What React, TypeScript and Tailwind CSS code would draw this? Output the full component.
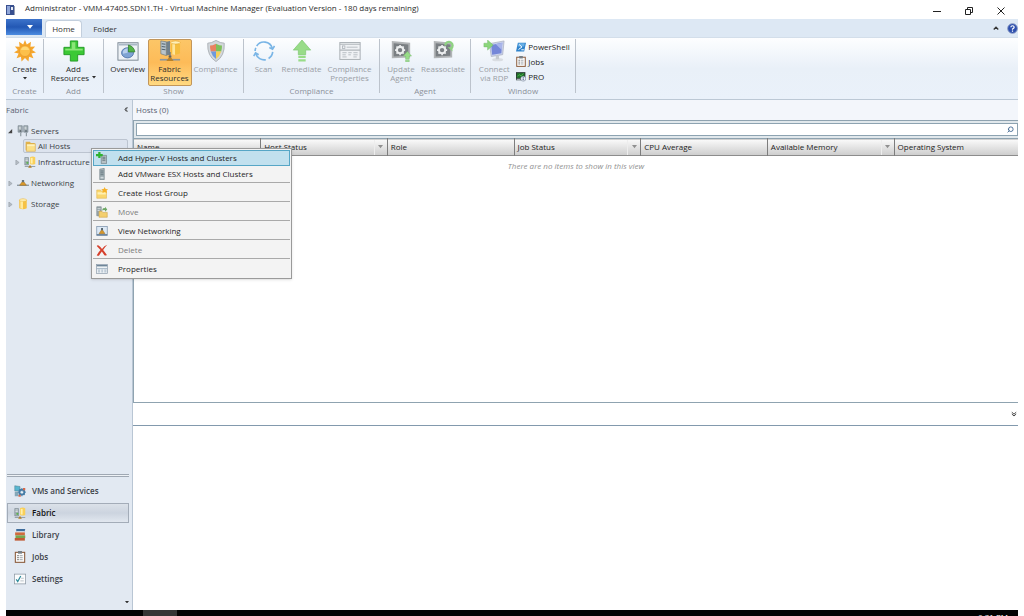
import React, { useState } from 'react';
import { Search } from 'lucide-react';

type IconProps = { className?: string };

const SunIcon = ({ className = '' }: IconProps) => (
  <svg viewBox="0 0 24 24" className={className}>
    <path
      d="M12 0l2 5 4.500-3-.6 5.300 5.100-.3-3.200 4 4.200 2.500-5 1.300 2.200 5-4.800-1.600-.6 5.300L12 19.500l-3.800 4-.6-5.300-4.800 1.600 2.200-5-5-1.300 4.200-2.500-3.200-4 5.100.3L5.500 2 10 5z"
      fill="#f5a62c"
    />
    <circle cx="12" cy="12" r="6" fill="#fdc04a" stroke="#e8982a" strokeWidth=".8" />
    <path d="M7.500 11a4.600 4.600 0 0 1 9 0z" fill="#ffd875" />
  </svg>
);

const PlusIcon = ({ className = '' }: IconProps) => (
  <svg viewBox="0 0 24 24" className={className}>
    <path d="M8 1h8v7h7v8h-7v7H8v-7H1V8h7z" fill="#3cc935" stroke="#229a25" strokeWidth="1" />
    <path d="M9.500 2.500h4v7h8v2h-19v-2h7z" fill="#8be578" />
  </svg>
);

const OverviewIcon = ({ className = '' }: IconProps) => (
  <svg viewBox="0 0 24 24" className={className}>
    <rect x="1" y="3" width="22" height="19" fill="#eef2f6" stroke="#76838f" />
    <rect x="2" y="4" width="20" height="2" fill="#a9b8c6" />
    <ellipse cx="11.500" cy="14" rx="6.500" ry="5.500" fill="#7fa3d3" stroke="#5276ab" />
    <path d="M6.500 12q2-3 5-3v5l-5 1z" fill="#b7cfec" />
    <path d="M12.500 13V5.500q6 1.500 7 7.500z" fill="#55b548" stroke="#2d7a2a" strokeWidth=".8" />
  </svg>
);

const FabricIcon = ({ className = '' }: IconProps) => (
  <svg viewBox="0 0 24 24" className={className}>
    <path d="M2 1l6 1v15l-6-2z" fill="#b9c5cc" stroke="#68767f" strokeWidth=".7" />
    <path d="M8 2l4-1v15l-4 1z" fill="#71818c" />
    <path d="M3 4l4 .6M3 7l4 .6M3 10l4 .6" stroke="#50626e" strokeWidth="1.100" />
    <path d="M13 2.500v12q4.500 3 10 0v-12z" fill="#f5bd3e" />
    <path d="M14.500 3v12.500l3 .8V4z" fill="#ffe59a" />
    <ellipse cx="18" cy="2.700" rx="5" ry="1.700" fill="#fff0b8" stroke="#e0a32b" strokeWidth=".6" />
    <path d="M1 21.500h22" stroke="#8b969e" strokeWidth="1.800" />
    <path d="M12 13v6" stroke="#6c7880" strokeWidth="1.500" />
    <path d="M8 23l4-5.500 4 5.500z" fill="#b9822a" />
    <rect x="10.500" y="17" width="3" height="2" fill="#5c6165" />
  </svg>
);

const ShieldIcon = ({ className = '' }: IconProps) => (
  <svg viewBox="0 0 24 24" className={className}>
    <path d="M12 .5q5 3 9 3 .8 14-9 20Q2.200 17.500 3 3.500q4 0 9-3z" fill="#d3d8dc" stroke="#a8aeb4" />
    <path d="M12 4Q8 6 5.500 6q-.2 3 .8 6.500H12z" fill="#ea8261" />
    <path d="M12 4q4 2 6.500 2 .2 3-.8 6.500H12z" fill="#7fc05c" />
    <path d="M6.300 12.500H12v8.200Q8 18 6.300 12.500z" fill="#6f99dc" />
    <path d="M17.700 12.500H12v8.200q4-2.700 5.700-8.200z" fill="#f5d05a" />
  </svg>
);

const ScanIcon = ({ className = '' }: IconProps) => (
  <svg viewBox="0 0 24 24" className={className} fill="none" stroke="#79b5e6" strokeWidth="1.800">
    <path d="M4 6.500A9.500 9.500 0 0 1 21 9M21.500 13a9.500 9.500 0 0 1-4.500 7.200M14 21.500A9.700 9.700 0 0 1 3 15M2.300 12q0-2 .8-3.500" />
    <path d="M23.500 6.500L21.300 10l-3.500-1.700M.8 17.500L2.800 14l3.400 2" />
  </svg>
);

const RemediateIcon = ({ className = '' }: IconProps) => (
  <svg viewBox="0 0 24 24" className={className}>
    <path d="M12 0l9.500 11H16v5H8v-5H2.500z" fill="#98dc88" stroke="#7ac56c" strokeWidth=".7" />
    <path d="M8 17.300h8v2.400H8zM8 21h8v2.400H8z" fill="#98dc88" />
  </svg>
);

const FormIcon = ({ className = '' }: IconProps) => (
  <svg viewBox="0 0 26 22" className={className}>
    <rect x="1" y="1" width="24" height="20" fill="#f0f2f5" stroke="#adb3b8" strokeWidth="1.200" />
    <path d="M1 3h24M1 10h24" stroke="#b0b6bb" strokeWidth="1.300" />
    <rect x="4" y="5" width="3" height="3" fill="none" stroke="#a0a7ad" strokeWidth=".8" />
    <path d="M9 6.500h13M4 13h5M11 13h4M17 13h5M4 15.500h4M11 15.500h3M17 15.500h5M4 18h5M17 18h4" stroke="#b5bbc1" strokeWidth="1.100" />
  </svg>
);

const Screen = () => (
  <>
    <path d="M2 1l20 2v16L2 20z" fill="#b1b4b6" />
    <path d="M4 3.500l16 1.300v12.500l-16 .7z" fill="#7a7f83" />
    <circle cx="11" cy="11" r="3.500" fill="none" stroke="#eceeef" strokeWidth="2.200" />
    <path d="M11 5.500v2M11 14.500v2M5.500 11h2M14.500 11h2M7.100 7.100l1.400 1.400M13.500 13.500l1.400 1.400M7.100 14.900l1.400-1.400M13.500 8.500l1.400-1.400" stroke="#eceeef" strokeWidth="1.800" />
  </>
);

const UpdateAgentIcon = ({ className = '' }: IconProps) => (
  <svg viewBox="0 0 24 24" className={className}>
    <Screen />
    <path d="M19 12.500l4.500 5H21V21h-4v-3.500h-2.500zM17 22h4v1.700h-4z" fill="#98dc88" stroke="#79bd6e" strokeWidth=".5" />
  </svg>
);

const ReassociateIcon = ({ className = '' }: IconProps) => (
  <svg viewBox="0 0 24 24" className={className}>
    <Screen />
    <path d="M14.500 6a4 4 0 1 1 6 3.500" fill="none" stroke="#8fd383" strokeWidth="2.500" />
    <path d="M17 8l5-.5.500 5z" fill="#8fd383" />
  </svg>
);

const RdpIcon = ({ className = '' }: IconProps) => (
  <svg viewBox="0 0 24 24" className={className}>
    <path d="M7 4l16-3-1.500 15L9 18z" fill="#c8d0ec" stroke="#a4aab9" strokeWidth=".7" />
    <path d="M9 5.500l12-2.500-1 11.500-10 1.500z" fill="#7587d8" />
    <path d="M14 4.500l7-1.500-.5 8z" fill="#a9b5ea" />
    <ellipse cx="16" cy="21.500" rx="6" ry="1.800" fill="#d9dde2" />
    <path d="M14 17h3.500v4H14z" fill="#c5cad0" />
    <path d="M1 3.500h4V0l6 5.500L5 11V7.500H1z" fill="#8bd67b" stroke="#70b866" strokeWidth=".5" />
  </svg>
);

const PowerShellIcon = ({ className = '' }: IconProps) => (
  <svg viewBox="0 0 16 16" className={className}>
    <path d="M3 1h13l-3 14H0z" fill="#2f83cc" />
    <path d="M4 2h10l-1 5H3z" fill="#67aee5" />
    <path d="M5 4l4.500 4L4 12M8.500 12.500h4" fill="none" stroke="#fff" strokeWidth="1.600" />
  </svg>
);

const ClipboardIcon = ({ className = '' }: IconProps) => (
  <svg viewBox="0 0 16 18" className={className}>
    <rect x="1" y="2" width="14" height="15" fill="#fafafa" stroke="#8a5a3a" strokeWidth="1.600" />
    <rect x="5" y="0" width="6" height="4" fill="#777f85" />
    <path d="M4 7h2M4 10h2M4 13h2" stroke="#444" strokeWidth="1.400" />
    <path d="M7.500 7H12M7.500 10H12M7.500 13H12" stroke="#8e969c" strokeWidth="1.200" />
  </svg>
);

const ProIcon = ({ className = '' }: IconProps) => (
  <svg viewBox="0 0 16 16" className={className}>
    <rect x="0" y="1" width="15" height="13" fill="#2b3a35" />
    <rect x="1.500" y="2.500" width="12" height="8" fill="#21702b" />
    <path d="M2 8l3-3 3 2 4-4" stroke="#55c553" fill="none" strokeWidth="1.200" />
    <rect x="1" y="11.500" width="6" height="2" fill="#aeb7bc" />
    <circle cx="11.500" cy="11.500" r="4" fill="#f2f5fa" stroke="#6b7b92" strokeWidth=".8" />
    <path d="M11.500 8.800v1.400M11.500 11v3" stroke="#28407c" strokeWidth="1.400" />
  </svg>
);

const ServersIcon = ({ className = '' }: IconProps) => (
  <svg viewBox="0 0 16 16" className={className}>
    <path d="M1.500 1h5.500v8.500H1.500zM9 1h5.500v8.500H9z" fill="#a2adb3" stroke="#75828a" strokeWidth=".9" />
    <path d="M2.500 3h2.500M2.500 5h2.500M10 3h2.500M10 5h2.500" stroke="#eef1f2" />
    <path d="M5 10v5M12.500 10v5" stroke="#8b979e" strokeWidth="1.500" />
    <circle cx="4.500" cy="8" r="1.200" fill="#606b72" />
    <circle cx="12" cy="8" r="1.200" fill="#606b72" />
  </svg>
);

const FolderIcon = ({ className = '' }: IconProps) => (
  <svg viewBox="0 0 16 16" className={className}>
    <path d="M1 1h6l1.500 2H14v10H1z" fill="#e2b34b" />
    <path d="M2 4h13v11H2z" fill="#fbdf86" stroke="#d1a03d" strokeWidth=".8" />
    <path d="M3 5h11v2.500H3z" fill="#fff1bc" />
  </svg>
);

const InfraIcon = ({ className = '' }: IconProps) => (
  <svg viewBox="0 0 16 16" className={className}>
    <path d="M1 2h5v10H1z" fill="#a3afb5" stroke="#75838b" strokeWidth=".7" />
    <path d="M2 4h3M2 6h3" stroke="#e4e9eb" />
    <circle cx="4.500" cy="9" r="1.500" fill="#5cb352" />
    <path d="M8 1.500q3.500-1.500 7 0v9q-3.500 1.500-7 0z" fill="#f9cf58" />
    <path d="M9 2.500h2.500v7.500H9z" fill="#fff0ac" />
    <path d="M1 14h14" stroke="#909ba2" strokeWidth="1.200" />
    <path d="M5.500 15.500L8 11.500l2.500 4z" fill="#b28028" />
  </svg>
);

const NetworkIcon = ({ className = '' }: IconProps) => (
  <svg viewBox="0 0 16 16" className={className}>
    <path d="M0 11h16" stroke="#7e8d99" strokeWidth="1.600" />
    <path d="M3.500 11L8 5l4.500 6z" fill="#dc9a2b" stroke="#9c691c" strokeWidth=".7" />
    <rect x="6.500" y="4" width="3" height="3" fill="#66737c" />
  </svg>
);

const CylinderIcon = ({ className = '' }: IconProps) => (
  <svg viewBox="0 0 16 16" className={className}>
    <path d="M3 2.500q5-3 10 0v11q-5 3-10 0z" fill="#f6c245" />
    <path d="M4.500 3h3.500v11.500l-3.500-.8z" fill="#ffea9d" />
    <ellipse cx="8" cy="2.800" rx="5" ry="1.700" fill="#fff1b6" stroke="#e5ad39" strokeWidth=".6" />
  </svg>
);

const ServerIcon = ({ className = '' }: IconProps) => (
  <svg viewBox="0 0 16 16" className={className}>
    <path d="M5 1.500l6-1v15H5z" fill="#a6b3b8" stroke="#6a7a80" strokeWidth=".8" />
    <path d="M6 4h4M6 6.500h4M6 9h4" stroke="#52646b" />
    <path d="M6 13h4" stroke="#e6ecee" strokeWidth="1.200" />
  </svg>
);

const AddServerIcon = ({ className = '' }: IconProps) => (
  <svg viewBox="0 0 16 16" className={className}>
    <path d="M7 4.500h7v11H7z" fill="#b5c0c4" stroke="#66767c" strokeWidth=".8" />
    <path d="M8.500 7h4M8.500 9h4M8.500 11h4" stroke="#52646b" />
    <path d="M3 0h3v2.500h3v3H6V8H3V5.500H0v-3h3z" fill="#2eb22f" />
  </svg>
);

const NewFolderIcon = ({ className = '' }: IconProps) => (
  <svg viewBox="0 0 16 16" className={className}>
    <path d="M1 4h5l1 1.500h7V15H1z" fill="#fad66d" stroke="#e3b854" strokeWidth=".8" />
    <path d="M2 7h11v3H2z" fill="#fff0b1" />
    <path d="M11.500 0l1.300 2.500L16 3l-2 2 .7 3-3.200-1.500L8.500 8l.6-3L7 3l3.200-.5z" fill="#f6b128" />
  </svg>
);

const MoveIcon = ({ className = '' }: IconProps) => (
  <svg viewBox="0 0 16 16" className={className}>
    <path d="M1 1h6v12H1z" fill="#9aa7ac" stroke="#697980" strokeWidth=".7" />
    <path d="M2 3.500h4M2 6h3" stroke="#dfe5e7" />
    <path d="M4 7h4l1 1.500h6V15H4z" fill="#f4cf6e" stroke="#c99b3c" strokeWidth=".7" />
    <path d="M8 6q1-4 4-3V1l3 3.500-3 3v-2Q10 5 8 6z" fill="#6da864" />
  </svg>
);

const ViewNetworkIcon = ({ className = '' }: IconProps) => (
  <svg viewBox="0 0 16 16" className={className}>
    <rect x="1" y="2" width="14" height="12" fill="#dde9f5" stroke="#7c93ab" />
    <path d="M1 13h14" stroke="#59748f" strokeWidth="1.500" />
    <path d="M4 11.500L8 5.500l4 6z" fill="#d99728" stroke="#8f6420" strokeWidth=".6" />
    <rect x="6.800" y="4" width="2.500" height="3" fill="#55636c" />
  </svg>
);

const DeleteIcon = ({ className = '' }: IconProps) => (
  <svg viewBox="0 0 16 16" className={className}>
    <path d="M1 2.500Q2 1 3.500 2 6 4 8 6.500 11 2.500 15 1 11.500 4.500 9.500 8q2.500 3 5 6.500-2 1.500-3.500 0L7.800 10Q5.500 13 4 15.500q-1.500.5-3-.5 2-4 5-7Q3.500 5 1 2.500z" fill="#d6402c" />
  </svg>
);

const PropertiesIcon = ({ className = '' }: IconProps) => (
  <svg viewBox="0 0 16 16" className={className}>
    <rect x=".5" y="2" width="15" height="12" fill="#eef2f5" stroke="#8b9aa8" strokeWidth=".9" />
    <path d="M1 3.500h14" stroke="#6f8699" strokeWidth="2" />
    <path d="M1 7.500h14M2.500 9.500h3M7 9.500h2.500M11 9.500h3M2.500 11.800h3M7 11.800h2.500M11 11.800h3" stroke="#8ea3b5" strokeWidth="1" />
  </svg>
);

const VmIcon = ({ className = '' }: IconProps) => (
  <svg viewBox="0 0 16 16" className={className}>
    <path d="M1 1l7 1v6H1z" fill="#58b6d0" stroke="#51808f" strokeWidth=".7" />
    <path d="M1 9h5v6H1z" fill="#84a7b8" />
    <circle cx="10.500" cy="9.500" r="3.300" fill="none" stroke="#447ca6" strokeWidth="2.200" />
    <path d="M10.500 4v11M5 9.500h11M6.500 5.700l8 7.600M14.500 5.700l-8 7.600" stroke="#447ca6" strokeWidth="1.200" />
    <circle cx="10.500" cy="9.500" r="1.600" fill="#e4eef4" />
    <path d="M12 4h3v3h-3zM6 13h3v2.500H6z" fill="#d4674b" />
  </svg>
);

const LibraryIcon = ({ className = '' }: IconProps) => (
  <svg viewBox="0 0 16 16" className={className}>
    <path d="M3 0h12l-1 3.500H3z" fill="#3d6c9c" />
    <path d="M3 3h11v1.500H3z" fill="#e7edf0" />
    <path d="M1.500 4.500h13v4h-13z" fill="#cf6a3d" />
    <path d="M2 8.500h13v3.500H2z" fill="#77a64f" />
    <path d="M1 12h13.500v3.500H1z" fill="#c05a34" />
  </svg>
);

const SettingsIcon = ({ className = '' }: IconProps) => (
  <svg viewBox="0 0 16 16" className={className}>
    <rect x=".5" y="1.500" width="15" height="13" fill="#fbfcfd" stroke="#8d99a4" />
    <path d="M3 8.500l2 3L9 4" fill="none" stroke="#2a8a9a" strokeWidth="1.600" />
    <path d="M9.500 7H13M8.500 10.500H13" stroke="#a8b2ba" />
  </svg>
);

const Caret = ({ className = '' }: IconProps) => (
  <svg viewBox="0 0 8 5" className={className}>
    <path d="M0 0h8L4 5z" fill="currentColor" />
  </svg>
);

type RibbonButtonProps = {
  icon: React.ComponentType<IconProps>;
  lines: string[];
  width: string;
  disabled?: boolean;
  active?: boolean;
  caret?: 'below' | 'inline';
};

const RibbonButton = ({ icon: Icon, lines, width, disabled, active, caret }: RibbonButtonProps) => (
  <button
    disabled={disabled}
    className={`flex h-[47px] shrink-0 flex-col items-center rounded-xs border leading-[9px] whitespace-nowrap ${width} ${
      active ? 'border-[#c2965a] bg-linear-to-b from-[#fcc667] via-[#fdbb58] to-[#ffd981]' : 'border-transparent'
    } ${disabled ? 'text-[#9a9ea5]' : 'text-[#2c2c2c]'}`}
  >
    <Icon className="mb-[2px] h-[22px] w-[22px] shrink-0" />
    {lines.map((line, i) => (
      <span key={line} className="flex items-center gap-[3px]">
        {line}
        {caret === 'inline' && i === lines.length - 1 && <Caret className="w-1" />}
      </span>
    ))}
    {caret === 'below' && <Caret className="mt-1 w-1" />}
  </button>
);

const RibbonGroup = ({ label, width, children }: { label: string; width: string; children: React.ReactNode }) => (
  <section className={`flex h-[54px] shrink-0 flex-col justify-between border-r border-[#bcc3cc] ${width}`}>
    <div className="flex justify-center">{children}</div>
    <h2 className="text-center leading-[5px] text-[#8b9099]">{label}</h2>
  </section>
);

const menuItems = [
  { label: 'Add Hyper-V Hosts and Clusters', icon: AddServerIcon, selected: true },
  { label: 'Add VMware ESX Hosts and Clusters', icon: ServerIcon },
  { label: 'Create Host Group', icon: NewFolderIcon, divided: true },
  { label: 'Move', icon: MoveIcon, divided: true, disabled: true },
  { label: 'View Networking', icon: ViewNetworkIcon, divided: true },
  { label: 'Delete', icon: DeleteIcon, divided: true, disabled: true },
  { label: 'Properties', icon: PropertiesIcon, divided: true },
];

const ContextMenu = () => (
  <div
    role="menu"
    className="absolute top-12 left-[85px] z-10 w-[201px] border border-[#9a9a9a] bg-[#f3f3f3] p-px text-[#1e1e1e] shadow-sm"
  >
    {menuItems.map(({ label, icon: Icon, selected, divided, disabled }) => (
      <div key={label} className={divided ? 'border-t border-[#a9a9a9] pt-[2px]' : ''}>
        <button
          role="menuitem"
          disabled={disabled}
          className={`flex h-4 w-full items-center border pl-[2px] text-left ${
            selected ? 'border-[#56a6c6] bg-[#c1e0ee]' : 'border-transparent'
          } ${disabled ? 'text-[#7b7b7b]' : ''}`}
        >
          <Icon className="mr-[10px] h-3 w-3 shrink-0" />
          {label}
        </button>
      </div>
    ))}
  </div>
);

const columns = [
  { label: 'Name' },
  { label: 'Host Status', filter: true },
  { label: 'Role' },
  { label: 'Job Status', filter: true },
  { label: 'CPU Average' },
  { label: 'Available Memory', filter: true },
  { label: 'Operating System' },
];

const workspaces = [
  { label: 'VMs and Services', icon: VmIcon },
  { label: 'Fabric', icon: InfraIcon },
  { label: 'Library', icon: LibraryIcon },
  { label: 'Jobs', icon: ClipboardIcon },
  { label: 'Settings', icon: SettingsIcon },
];

const TitleBar = () => (
  <header className="flex h-[19px] shrink-0 items-start justify-between">
    <div className="flex items-start pt-[5px]">
      <svg viewBox="0 0 10 10" className="h-[10px] w-[10px]">
        <rect x="0" y="0" width="8" height="10" fill="#39508f" />
        <path d="M1 1h3v8H1z" fill="#8fa6d8" />
        <path d="M5 2h2v3H5z" fill="#e6ebf6" />
        <rect x="8" y="1" width="1" height="9" fill="#98a1b5" />
      </svg>
      <h1 className="h-[10px] overflow-hidden pl-[9px] leading-[6px] text-[#2b2b2b]">
        Administrator - VMM-47405.SDN1.TH - Virtual Machine Manager (Evaluation Version - 180 days remaining)
      </h1>
    </div>
    <div className="flex items-center gap-6 pt-[7px] pr-[13px]">
      <button aria-label="Minimize">
        <svg viewBox="0 0 8 8" className="h-2 w-2"><path d="M0 4.500h8" stroke="#222" /></svg>
      </button>
      <button aria-label="Restore">
        <svg viewBox="0 0 8 8" className="h-2 w-2" fill="none" stroke="#222">
          <path d="M.5 2.500h5v5h-5zM2.500 2V.5h5v5H6" />
        </svg>
      </button>
      <button aria-label="Close">
        <svg viewBox="0 0 8 8" className="h-2 w-2"><path d="M.5.5l7 7M7.500.5l-7 7" stroke="#222" /></svg>
      </button>
    </div>
  </header>
);

const Ribbon = () => (
  <>
    <nav className="flex h-[18px] shrink-0 items-end bg-[#dde8f4]">
      <button aria-label="Application menu" className="mr-[3px] flex h-4 w-9 items-center justify-center self-start bg-linear-to-b from-[#3d74cb] via-[#2358b4] to-[#4d8ce0] pl-3 text-white">
        <Caret className="w-[6px]" />
      </button>
      <button className="h-[17px] w-[37px] rounded-t-sm border border-b-0 border-[#c3cfdd] bg-white text-[#333]">Home</button>
      <button className="h-[17px] w-[46px] text-[#333]">Folder</button>
      <div className="ml-auto flex items-center gap-2 self-center">
        <button aria-label="Collapse ribbon">
          <svg viewBox="0 0 8 8" className="h-[6px] w-[6px]"><path d="M1 6l3-3 3 3" fill="none" stroke="#333" strokeWidth="1.800" /></svg>
        </button>
        <button aria-label="Help">
          <svg viewBox="0 0 12 12" className="h-[11px] w-[11px]">
            <circle cx="6" cy="6" r="5.300" fill="#2d4fae" stroke="#8a9ac4" />
            <path d="M4.200 4.700Q4.300 3 6 3t1.800 1.500Q7.800 5.500 6 6.500v.8M6 8.200v1.300" fill="none" stroke="#fff" strokeWidth="1.300" />
          </svg>
        </button>
      </div>
    </nav>
    <div className="flex h-[63px] shrink-0 items-start border-y border-t-[#d3deea] border-b-[#bcc8d5] bg-linear-to-b from-[#fdfeff] via-[#e9f0f8] to-[#eaf1fa] pt-px">
      <RibbonGroup label="Create" width="w-[38px]">
        <RibbonButton icon={SunIcon} lines={['Create']} width="w-9" caret="below" />
      </RibbonGroup>
      <RibbonGroup label="Add" width="w-[60px]">
        <RibbonButton icon={PlusIcon} lines={['Add', 'Resources']} width="w-14" caret="inline" />
      </RibbonGroup>
      <RibbonGroup label="Show" width="w-[140px]">
        <RibbonButton icon={OverviewIcon} lines={['Overview']} width="w-10" />
        <RibbonButton icon={FabricIcon} lines={['Fabric', 'Resources']} width="w-11" active />
        <RibbonButton icon={ShieldIcon} lines={['Compliance']} width="w-12" disabled />
      </RibbonGroup>
      <RibbonGroup label="Compliance" width="w-[136px]">
        <RibbonButton icon={ScanIcon} lines={['Scan']} width="w-7" disabled />
        <RibbonButton icon={RemediateIcon} lines={['Remediate']} width="w-12" disabled />
        <RibbonButton icon={FormIcon} lines={['Compliance', 'Properties']} width="w-12" disabled />
      </RibbonGroup>
      <RibbonGroup label="Agent" width="w-[91px]">
        <RibbonButton icon={UpdateAgentIcon} lines={['Update', 'Agent']} width="w-9" disabled />
        <RibbonButton icon={ReassociateIcon} lines={['Reassociate']} width="w-12" disabled />
      </RibbonGroup>
      <RibbonGroup label="Window" width="w-[105px]">
        <RibbonButton icon={RdpIcon} lines={['Connect', 'via RDP']} width="w-11" disabled />
        <div className="mr-1 flex flex-col items-start gap-1 pt-[2px] text-[#222]">
          <button className="flex h-[11px] items-center gap-[2px]"><PowerShellIcon className="h-[10px] w-[10px]" />PowerShell</button>
          <button className="flex h-[11px] items-center gap-[2px]"><ClipboardIcon className="h-[11px] w-[10px]" />Jobs</button>
          <button className="flex h-[11px] items-center gap-[2px]"><ProIcon className="h-[11px] w-[10px]" />PRO</button>
        </div>
      </RibbonGroup>
    </div>
  </>
);

const Expander = ({ open }: { open?: boolean }) => (
  <svg viewBox="0 0 6 6" className="h-[5px] w-[5px] shrink-0">
    {open ? <path d="M5 0v5H0z" fill="#444" /> : <path d="M1 0l4 3-4 3z" fill="#b5bcc4" stroke="#8e969f" strokeWidth=".6" />}
  </svg>
);

const Sidebar = ({ active, onSelect }: { active: string; onSelect: (name: string) => void }) => (
  <aside className="flex w-[127px] shrink-0 flex-col border-r border-[#b9c6d4] bg-[#e2e9f2] text-[#3b3f47]">
    <div className="flex h-[19px] shrink-0 items-center justify-between pr-1 text-[#5a6373]">
      <h2>Fabric</h2>
      <button aria-label="Collapse pane">
        <svg viewBox="0 0 4 6" className="h-[5px] w-[4px]"><path d="M2.500 .5L.8 3l1.700 2.500M3.800.5L2 3l1.800 2.500" fill="none" stroke="#333" strokeWidth="1" /></svg>
      </button>
    </div>
    <ul className="pt-1">
      <li className="flex h-4 items-center gap-1 pl-[2px]">
        <Expander open />
        <span className="flex items-center gap-[2px]"><ServersIcon className="h-3 w-3" />Servers</span>
      </li>
      <li className="mr-1 ml-[17px] flex h-[14px] items-center gap-[2px] rounded-xs border border-[#bcc4d0] bg-[#dce3ee] pl-px">
        <FolderIcon className="h-[11px] w-[11px]" />All Hosts
      </li>
      <li className="mt-px flex h-4 items-center gap-1 pl-[9px]">
        <Expander />
        <span className="flex items-center gap-[2px]"><InfraIcon className="h-3 w-3" />Infrastructure</span>
      </li>
      <li className="mt-[5px] flex h-4 items-center gap-1 pl-[2px]">
        <Expander />
        <span className="flex items-center gap-[2px]"><NetworkIcon className="h-3 w-3" />Networking</span>
      </li>
      <li className="mt-[5px] flex h-4 items-center gap-1 pl-[2px]">
        <Expander />
        <span className="flex items-center gap-[2px]"><CylinderIcon className="h-3 w-3" />Storage</span>
      </li>
    </ul>
    <div className="mt-auto mr-[3px] ml-px">
      <div className="mb-1 h-[3px] border-y border-[#9fa8b3] bg-[#eef2f6]" />
      {workspaces.map(({ label, icon: Icon }) => (
        <button
          key={label}
          onClick={() => onSelect(label)}
          className={`mb-[2px] flex h-5 w-full items-center gap-[6px] border pl-[6px] font-semibold ${
            active === label
              ? 'border-[#a3acb8] bg-linear-to-b from-[#dbe1e9] via-[#ccd4df] to-[#e1e7ef] text-[#111]'
              : 'border-transparent'
          }`}
        >
          <Icon className="h-3 w-3" />
          {label}
        </button>
      ))}
      <div className="flex h-[19px] items-center justify-end pt-[3px]">
        <button aria-label="Configure buttons" className="text-[#333]"><Caret className="w-1" /></button>
      </div>
    </div>
  </aside>
);

const HostsView = () => (
  <main className="flex min-w-0 flex-1 flex-col bg-white">
    <h2 className="flex h-5 shrink-0 items-center bg-[#f3f6fb] pl-[3px] text-[#5a6373]">Hosts (0)</h2>
    <div className="flex h-[283px] shrink-0 flex-col border-y border-l border-[#8fa3b0]">
      <div className="bg-[#e1e8ec] py-[2px] pl-[2px]">
        <label className="flex h-[13px] items-center border border-[#8da3b1] bg-white pr-[3px]">
          <span className="sr-only">Filter hosts</span>
          <input type="text" className="h-full min-w-0 flex-1 px-1 outline-none" />
          <Search className="h-[7px] w-[7px] -scale-x-100 text-[#3e6690]" strokeWidth={3} />
        </label>
      </div>
      <table className="w-full table-fixed">
        <thead>
          <tr className="h-[17px] border-y border-t-[#8fa3b0] border-b-[#8c8c8c] bg-linear-to-b from-[#f9f9f9] to-[#cecece]">
            {columns.map(({ label, filter }, i) => (
              <th key={label} className={`p-0 text-left font-normal text-[#222] ${i < columns.length - 1 ? 'w-[14.33%] border-r border-[#7d7d7d]' : ''}`}>
                <div className="flex h-[15px] items-center justify-between pl-[3px]">
                  {label}
                  {filter && (
                    <button aria-label={`Filter ${label}`} className="flex h-full w-[13px] items-center justify-center border-l border-[#ededed] text-[#909090]">
                      <Caret className="w-[5px]" />
                    </button>
                  )}
                </div>
              </th>
            ))}
          </tr>
        </thead>
        <tbody>
          <tr>
            <td colSpan={columns.length} className="h-5 p-0 text-center text-[#919191] italic">There are no items to show in this view</td>
          </tr>
        </tbody>
      </table>
    </div>
    <div className="flex h-[23px] shrink-0 items-center justify-end border-b border-[#8299ad] pr-px">
      <button aria-label="Expand details">
        <svg viewBox="0 0 6 6" className="h-[6px] w-[6px]"><path d="M.8 1.200L3 3.200l2.200-2M.8 3L3 5l2.200-2" fill="none" stroke="#444" strokeWidth="1" /></svg>
      </button>
    </div>
  </main>
);

const App = () => {
  const [workspace, setWorkspace] = useState('Fabric');

  return (
    <div className="flex h-screen flex-col overflow-hidden bg-white px-[6px] font-['Open_Sans','Noto_Sans',sans-serif] text-[8px]">
      <TitleBar />
      <Ribbon />
      <div className="relative flex min-h-0 flex-1">
        <Sidebar active={workspace} onSelect={setWorkspace} />
        <HostsView />
        <ContextMenu />
      </div>
      <footer className="flex h-[6px] shrink-0 overflow-hidden bg-[#030303] text-white">
        <div className="ml-[137px] h-full w-[34px] bg-[#353535]" />
        <time className="mt-[1px] mr-[10px] ml-auto leading-3">6:31 PM</time>
      </footer>
    </div>
  );
};

export default App;
